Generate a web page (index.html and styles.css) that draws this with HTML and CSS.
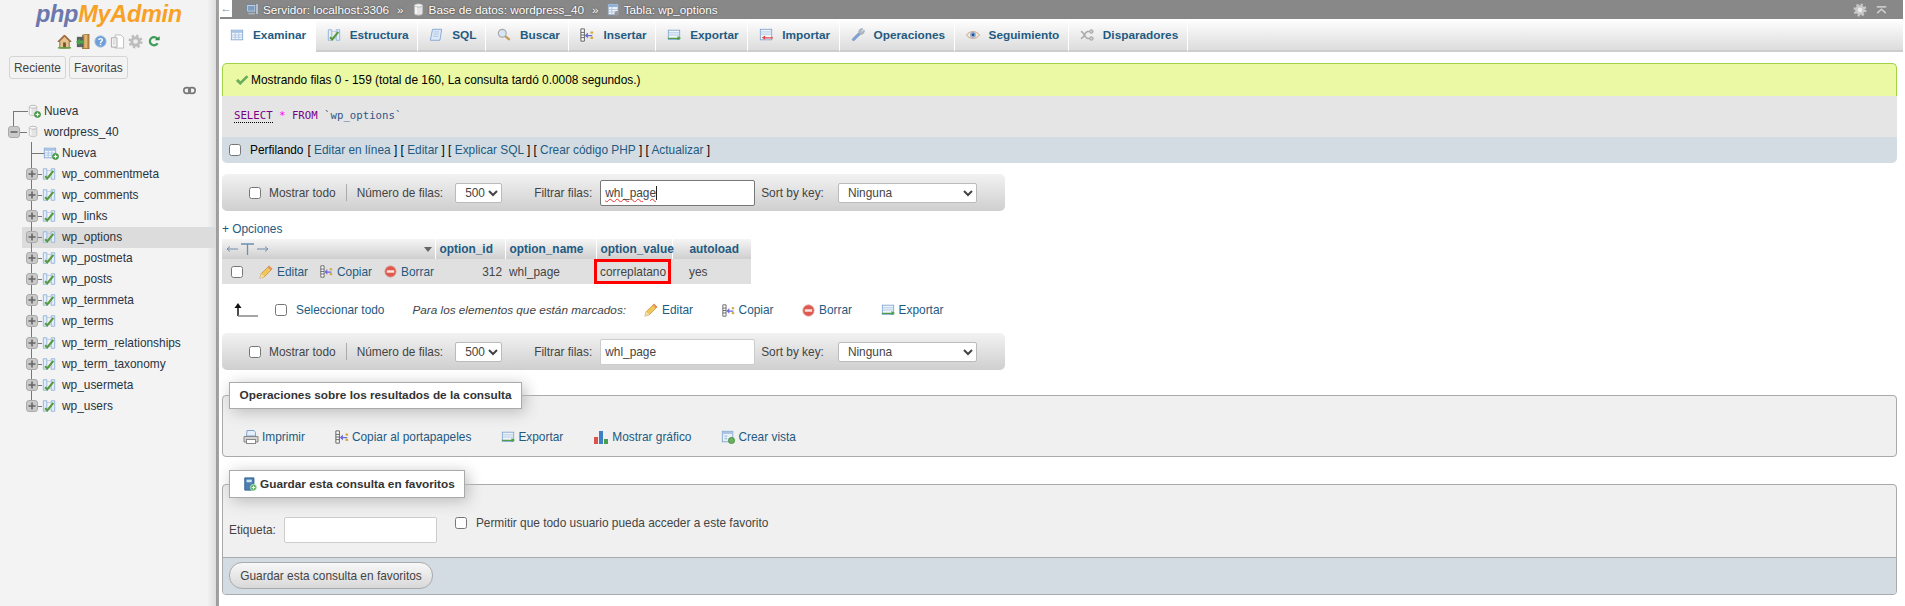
FILE: index.html
```html
<!DOCTYPE html>
<html lang="es">
<head>
<meta charset="utf-8">
<title>phpMyAdmin</title>
<link rel="stylesheet" href="styles.css">
</head>
<body>
<svg class="defs" width="0" height="0" aria-hidden="true">
  <defs>
    <symbol id="i-home" viewBox="0 0 16 16"><path d="M8 1 1 8h2v7h10V8h2z" fill="#e3c48f" stroke="#8a6a3c"/><path d="M8 1 1 8h2l5-5 5 5h2z" fill="#a5623a"/><rect x="6.5" y="9" width="3" height="6" fill="#7a5230"/><rect x="1" y="14" width="14" height="1.5" fill="#5ea34a"/></symbol>
    <symbol id="i-exit" viewBox="0 0 16 16"><path d="M8 1l7-1v16H8z" fill="#c08b45" stroke="#7a5523" stroke-width=".6"/><rect x="10" y="1" width="3" height="14" fill="#e2b673"/><rect x="2" y="3" width="7" height="11" fill="#59635c"/><path d="M1 8.500 5 5v2h4v3H5v2z" fill="#49a84f"/></symbol>
    <symbol id="i-help" viewBox="0 0 16 16"><circle cx="8" cy="8" r="7" fill="#6f9fd8" stroke="#a9c4e4"/><path d="M5.800 6.200C6 3.800 10.300 3.800 10.300 6.200 10.300 8 8 7.800 8 9.700" fill="none" stroke="#fff" stroke-width="1.700"/><rect x="7.100" y="10.700" width="1.800" height="1.800" fill="#fff"/></symbol>
    <symbol id="i-docs" viewBox="0 0 16 16"><path d="M5.500 1h6l3 3v11h-9z" fill="#fff" stroke="#bbb"/><path d="M1.500 4h6v10h-6z" fill="#f5f5f5" stroke="#aaa"/><path d="M3 6.500h3M3 8.500h3M3 10.500h3" stroke="#ccc"/></symbol>
    <symbol id="i-gear" viewBox="0 0 16 16"><circle cx="8" cy="8" r="5.500" fill="currentColor"/><circle cx="8" cy="8" r="6" fill="none" stroke="currentColor" stroke-width="3" stroke-dasharray="2.400 2.310"/><circle cx="8" cy="8" r="2.500" fill="#eee"/></symbol>
    <symbol id="i-reload" viewBox="0 0 16 16"><path d="M12.500 5A5.500 5.500 0 1 0 12.800 11" fill="none" stroke="#3f9d56" stroke-width="3"/><path d="M9 7h6.500V1.500z" fill="#2e8a47"/></symbol>
    <symbol id="i-link" viewBox="0 0 16 10"><rect x="1" y="1.500" width="8" height="7" rx="3.500" fill="none" stroke="#777" stroke-width="2"/><rect x="7" y="1.500" width="8" height="7" rx="3.500" fill="none" stroke="#777" stroke-width="2"/></symbol>
    <symbol id="i-db" viewBox="0 0 16 16"><path d="M3 3v10c0 2.600 10 2.600 10 0V3z" fill="#e4e4e4" stroke="#bbb"/><ellipse cx="8" cy="3" rx="5" ry="2" fill="#f7f7f7" stroke="#aaa"/><path d="M5 5v8" stroke="#fff" stroke-width="1.500"/></symbol>
    <symbol id="i-plusdot" viewBox="0 0 8 8"><circle cx="4" cy="4" r="3.500" fill="#4fa84f" stroke="#2f7d32" stroke-width=".7"/><path d="M2 4h4M4 2v4" stroke="#fff" stroke-width="1.200"/></symbol>
    <symbol id="i-plusbox" viewBox="0 0 12 12"><rect x=".5" y=".5" width="11" height="11" rx="2.500" fill="#c9c9c9" stroke="#aaa"/><path d="M2.500 6h7M6 2.500v7" stroke="#666" stroke-width="1.600"/></symbol>
    <symbol id="i-minusbox" viewBox="0 0 12 12"><rect x=".5" y=".5" width="11" height="11" rx="2.500" fill="#c9c9c9" stroke="#aaa"/><path d="M2.500 6h7" stroke="#666" stroke-width="1.600"/></symbol>
    <symbol id="i-table" viewBox="0 0 16 16"><rect x="1.500" y="2.500" width="13" height="11" fill="#f4f8fd" stroke="#7fa3cf"/><rect x="2" y="3" width="12" height="2.500" fill="#a9c3e4"/><path d="M2 8h12M2 10.500h12M6 5.500v8M10 5.500v8" stroke="#a9c3e4"/></symbol>
    <symbol id="i-props" viewBox="0 0 16 16"><path d="M1.500 2h4v12h-4zM10.500 2h4v12h-4z" fill="#e4eef9" stroke="#8fb0d8"/><path d="M5.500 4h5M5.500 12h5" stroke="#b8cce6"/><path d="M3.500 10.500 6 13l7-8.500" fill="none" stroke="#569a3f" stroke-width="2.400"/></symbol>
    <symbol id="i-sql" viewBox="0 0 16 16"><path d="M4 1.500h10.500L12.500 14H1.500z" fill="#dbe8f7" stroke="#7fa3cf"/><path d="M5.500 4.500h6M5 7h6M4.500 9.500h6" stroke="#a9c3e4"/></symbol>
    <symbol id="i-search" viewBox="0 0 16 16"><path d="M9 9l5.500 4.500" stroke="#c79a54" stroke-width="2.400"/><circle cx="6" cy="6" r="4.500" fill="#d7e6f7" stroke="#a7a7a7" stroke-width="1.300"/></symbol>
    <symbol id="i-insert" viewBox="0 0 16 16"><path d="M1 1h4v14H1z" fill="#fff" stroke="#555"/><path d="M1 5h4M1 8h4M1 11h4" stroke="#555"/><path d="M14 8H9V5L5.500 8.500 9 12V9.500h5z" fill="#6c6ad6"/><rect x="12" y="4" width="3" height="2.500" fill="#d6a83c"/><rect x="12" y="10" width="3" height="2.500" fill="#d6a83c"/></symbol>
    <symbol id="i-export" viewBox="0 0 16 16"><rect x="1.500" y="2.500" width="13" height="10.500" fill="#f0f5fb" stroke="#7fa3cf"/><path d="M2 5.500h12M2 8h12" stroke="#a9c3e4"/><path d="M1 11h11V9l4 2.500L12 14v-1.500H1z" fill="#4f9f4a"/></symbol>
    <symbol id="i-import" viewBox="0 0 16 16"><rect x="1.500" y="1.500" width="13" height="12" fill="#f0f5fb" stroke="#7fa3cf"/><path d="M2 4.500h12M2 7h12" stroke="#a9c3e4"/><path d="M16 10.500H7V8.500L3 11l4 2.500V12h9z" fill="#e0494a"/></symbol>
    <symbol id="i-wrench" viewBox="0 0 16 16"><path d="M2 12 9 5c-.5-2.500 1.500-4.500 4.500-4L11 3.500l1.500 1.500L15 2.500c.5 3-1.500 5-4 4.500l-7 7c-1.500 1.500-3.500-.5-2-2z" fill="#7fa3d3" stroke="#5f86b8" stroke-width=".6"/><path d="M9 5c-.5-2.500 1.500-4.500 4.500-4L11 3.500l1.500 1.500L15 2.500c.5 3-1.500 5-4 4.500z" fill="#b7b7b7"/></symbol>
    <symbol id="i-eye" viewBox="0 0 16 16"><path d="M.5 8C4 2.800 12 2.800 15.500 8 12 13.200 4 13.200.5 8z" fill="#f3e6da" stroke="#c99a77"/><circle cx="8" cy="7.800" r="3.300" fill="#86a9d8"/><circle cx="8" cy="7.800" r="1.400" fill="#234a80"/></symbol>
    <symbol id="i-trigger" viewBox="0 0 16 16"><path d="M1 4c4 0 4 8 8 8h2M1 12c4 0 4-8 8-8h2" fill="none" stroke="#aaa" stroke-width="1.800"/><circle cx="13" cy="4" r="2" fill="#ccc" stroke="#999"/><circle cx="13" cy="12" r="2" fill="#ccc" stroke="#999"/></symbol>
    <symbol id="i-check" viewBox="0 0 16 16"><path d="M1.500 9 6 13.500 15 4.500 13 3 6.300 9.800 3.300 7z" fill="#69b15e" stroke="#4a9144" stroke-width=".5"/></symbol>
    <symbol id="i-pencil" viewBox="0 0 16 16"><path d="M1 15l1.500-5L11.500 1l3.500 3.500-9 9z" fill="#f1c75b" stroke="#c08a2a" stroke-width=".8"/><path d="M1 15l1.500-5 3.500 3.500z" fill="#f3dfb4"/><path d="M11.500 1 15 4.500l-1.500 1.500L10 2.500z" fill="#e58c6a"/></symbol>
    <symbol id="i-del" viewBox="0 0 16 16"><circle cx="8" cy="8" r="7" fill="#e0594e" stroke="#d7b0aa"/><rect x="3.500" y="6.500" width="9" height="3" fill="#f7e6e3"/></symbol>
    <symbol id="i-print" viewBox="0 0 16 16"><path d="M4 1.500h7l1.500 2V7h-9z" fill="#e5eefa" stroke="#7fa3cf"/><path d="M1 7.500h14V13H1z" fill="#d3d3d3" stroke="#888"/><rect x="3.500" y="10.500" width="9" height="4" fill="#fff" stroke="#888"/></symbol>
    <symbol id="i-chart" viewBox="0 0 16 16"><rect x="1" y="8" width="4" height="7" fill="#d9534f"/><rect x="6" y="2" width="4" height="13" fill="#3f7fc4"/><rect x="11" y="10" width="4" height="5" fill="#4b9f4b"/></symbol>
    <symbol id="i-view" viewBox="0 0 16 16"><rect x="1.500" y="1.500" width="12" height="12" fill="#e8f0f9" stroke="#7fa3cf"/><rect x="2" y="2" width="11" height="2.500" fill="#a9c3e4"/><path d="M4 7h3M4 10h3" stroke="#7fa3cf"/><circle cx="12" cy="12" r="3.500" fill="#69b15e" stroke="#3f8a3c"/></symbol>
    <symbol id="i-book" viewBox="0 0 16 16"><path d="M2 1h10.500v14H2z" fill="#4a7fb0" stroke="#2f5f8f"/><rect x="4" y="3" width="6" height="3" fill="#cfe0f2"/><circle cx="12" cy="12" r="3.600" fill="#5db45c" stroke="#e8f5e8" stroke-width=".7"/><path d="M10 12h4M12 10v4" stroke="#fff"/></symbol>
    <symbol id="i-server" viewBox="0 0 16 16"><rect x="1" y="2" width="11" height="9" fill="#cfdcea" stroke="#6a7f96"/><rect x="2.500" y="3.500" width="8" height="6" fill="#7d9cc0"/><rect x="12" y="1" width="3" height="13" fill="#b9c2cc" stroke="#6f7a86" stroke-width=".6"/><rect x="3" y="12" width="8" height="2" fill="#aab4bf"/></symbol>
    <symbol id="i-tbl-bar" viewBox="0 0 16 16"><rect x="1.500" y="1.500" width="12" height="13" fill="#eef3f9" stroke="#8ca6c4"/><rect x="2" y="2" width="11" height="3" fill="#8fb0d8"/><path d="M2 8h11M2 11h11M6 5v9" stroke="#aebfd4"/><circle cx="12" cy="12.500" r="2.800" fill="#999"/></symbol>
    <symbol id="i-gear-top" viewBox="0 0 14 10"><path d="M1 1h12" stroke="#cfcfcf" stroke-width="2"/><path d="M1.500 9 7 4l5.500 5" fill="none" stroke="#cfcfcf" stroke-width="2"/></symbol>
    <symbol id="i-back" viewBox="0 0 25 14"><path d="M5 13V3" stroke="#111" stroke-width="1.500"/><path d="M1.500 5 5 0l3.500 5z" fill="#111"/><path d="M5 13h20" stroke="#888" stroke-width="1.500"/></symbol>
    <symbol id="i-cols" viewBox="0 0 41 12"><path d="M0 6h11M0 6l3-2.500M0 6l3 2.500M30 6h11M41 6l-3-2.500M41 6l-3 2.500" fill="none" stroke="#6d8fb0"/><path d="M14 1h13M20.500 1v11" stroke="#6d8fb0" stroke-width="1.300"/></symbol>
  </defs>
</svg>

<aside class="sidebar">
  <div class="logo"><span class="logo-php">php</span><span class="logo-my">MyAdmin</span></div>
  <div class="side-icons">
    <svg class="si"><use href="#i-home"/></svg>
    <svg class="si"><use href="#i-exit"/></svg>
    <svg class="si si-help"><use href="#i-help"/></svg>
    <svg class="si"><use href="#i-docs"/></svg>
    <svg class="si si-gear"><use href="#i-gear"/></svg>
    <svg class="si si-small"><use href="#i-reload"/></svg>
  </div>
  <div class="side-tabs">
    <button class="side-tab">Reciente</button>
    <button class="side-tab">Favoritas</button>
  </div>
  <div class="side-link"><svg class="link-ic"><use href="#i-link"/></svg></div>
  <ul class="tree">
    <li class="node node-top"><svg class="ic12 db"><use href="#i-db"/></svg><svg class="dot"><use href="#i-plusdot"/></svg><span>Nueva</span></li>
    <li class="node node-db"><svg class="box"><use href="#i-minusbox"/></svg><svg class="ic12 db"><use href="#i-db"/></svg><span>wordpress_40</span></li>
    <li class="node node-new"><svg class="ic14"><use href="#i-table"/></svg><svg class="dot dot-new"><use href="#i-plusdot"/></svg><span>Nueva</span></li>
    <li class="node node-t"><svg class="box box-t"><use href="#i-plusbox"/></svg><svg class="ic14"><use href="#i-props"/></svg><span>wp_commentmeta</span></li>
    <li class="node node-t"><svg class="box box-t"><use href="#i-plusbox"/></svg><svg class="ic14"><use href="#i-props"/></svg><span>wp_comments</span></li>
    <li class="node node-t"><svg class="box box-t"><use href="#i-plusbox"/></svg><svg class="ic14"><use href="#i-props"/></svg><span>wp_links</span></li>
    <li class="node node-t node-active"><svg class="box box-t"><use href="#i-plusbox"/></svg><svg class="ic14"><use href="#i-props"/></svg><span>wp_options</span></li>
    <li class="node node-t"><svg class="box box-t"><use href="#i-plusbox"/></svg><svg class="ic14"><use href="#i-props"/></svg><span>wp_postmeta</span></li>
    <li class="node node-t"><svg class="box box-t"><use href="#i-plusbox"/></svg><svg class="ic14"><use href="#i-props"/></svg><span>wp_posts</span></li>
    <li class="node node-t"><svg class="box box-t"><use href="#i-plusbox"/></svg><svg class="ic14"><use href="#i-props"/></svg><span>wp_termmeta</span></li>
    <li class="node node-t"><svg class="box box-t"><use href="#i-plusbox"/></svg><svg class="ic14"><use href="#i-props"/></svg><span>wp_terms</span></li>
    <li class="node node-t"><svg class="box box-t"><use href="#i-plusbox"/></svg><svg class="ic14"><use href="#i-props"/></svg><span>wp_term_relationships</span></li>
    <li class="node node-t"><svg class="box box-t"><use href="#i-plusbox"/></svg><svg class="ic14"><use href="#i-props"/></svg><span>wp_term_taxonomy</span></li>
    <li class="node node-t"><svg class="box box-t"><use href="#i-plusbox"/></svg><svg class="ic14"><use href="#i-props"/></svg><span>wp_usermeta</span></li>
    <li class="node node-t node-last"><svg class="box box-t"><use href="#i-plusbox"/></svg><svg class="ic14"><use href="#i-props"/></svg><span>wp_users</span></li>
  </ul>
</aside>

<main class="main">
  <div class="topwrap">
    <div class="toggle">←</div>
    <nav class="crumbs">
      <svg class="ic13"><use href="#i-server"/></svg><span class="crumb">Servidor: localhost:3306</span><span class="sep">»</span>
      <svg class="ic13"><use href="#i-db"/></svg><span class="crumb">Base de datos: wordpress_40</span><span class="sep">»</span>
      <svg class="ic13"><use href="#i-tbl-bar"/></svg><span class="crumb">Tabla: wp_options</span>
      <span class="crumbs-right"><svg class="ic14 gear-top"><use href="#i-gear"/></svg><svg class="up-ic"><use href="#i-gear-top"/></svg></span>
    </nav>
  </div>

  <nav class="tabs">
    <a class="tab tab-active"><svg class="ic14"><use href="#i-table"/></svg>Examinar</a>
    <a class="tab"><svg class="ic14"><use href="#i-props"/></svg>Estructura</a>
    <a class="tab"><svg class="ic14"><use href="#i-sql"/></svg>SQL</a>
    <a class="tab"><svg class="ic14"><use href="#i-search"/></svg>Buscar</a>
    <a class="tab"><svg class="ic14"><use href="#i-insert"/></svg>Insertar</a>
    <a class="tab"><svg class="ic14"><use href="#i-export"/></svg>Exportar</a>
    <a class="tab"><svg class="ic14"><use href="#i-import"/></svg>Importar</a>
    <a class="tab"><svg class="ic14"><use href="#i-wrench"/></svg>Operaciones</a>
    <a class="tab"><svg class="ic14"><use href="#i-eye"/></svg>Seguimiento</a>
    <a class="tab"><svg class="ic14"><use href="#i-trigger"/></svg>Disparadores</a>
    <div class="tab-rest"></div>
  </nav>

  <div class="content">
    <div class="success"><svg class="ic14"><use href="#i-check"/></svg>Mostrando filas 0 - 159 (total de 160, La consulta tardó 0.0008 segundos.)</div>
    <div class="sql"><span class="kw">SELECT</span> <span class="star">*</span> <span class="from">FROM</span> <span class="name">`wp_options`</span></div>
    <div class="profile">
      <input type="checkbox" class="cb">
      <span class="profile-label">Perfilando</span>
      <span class="profile-links">[ <a>Editar en línea</a> ] [ <a>Editar</a> ] [ <a>Explicar SQL</a> ] [ <a>Crear código PHP</a> ] [ <a>Actualizar</a> ]</span>
    </div>

    <div class="navbar">
      <input type="checkbox" class="cb">
      <span class="lb-all">Mostrar todo</span>
      <span class="vsep"></span>
      <span class="lb-rows">Número de filas:</span>
      <select class="sel sel-rows"><option>500</option></select>
      <span class="lb-filter">Filtrar filas:</span>
      <div class="filter filter-focus"><span class="typed">whl_page</span></div>
      <span class="lb-sort">Sort by key:</span>
      <select class="sel sel-key"><option>Ninguna</option></select>
    </div>

    <div class="options"><a>+ Opciones</a></div>

    <table class="results">
      <thead>
        <tr>
          <th class="c-actions"><div class="th-tools"><svg class="cols-ic"><use href="#i-cols"/></svg><span class="tri"></span></div></th>
          <th class="c-id">option_id</th>
          <th class="c-name">option_name</th>
          <th class="c-value">option_value</th>
          <th class="c-auto">autoload</th>
        </tr>
      </thead>
      <tbody>
        <tr>
          <td class="c-actions">
            <div class="row-actions">
              <input type="checkbox" class="cb">
              <a class="act"><svg class="ic14"><use href="#i-pencil"/></svg>Editar</a>
              <a class="act"><svg class="ic13"><use href="#i-insert"/></svg>Copiar</a>
              <a class="act"><svg class="ic13"><use href="#i-del"/></svg>Borrar</a>
            </div>
          </td>
          <td class="num">312</td>
          <td class="c-name">whl_page</td>
          <td class="c-value marked">correplatano</td>
          <td class="c-auto">yes</td>
        </tr>
      </tbody>
    </table>

    <div class="bulk">
      <svg class="back-ic"><use href="#i-back"/></svg>
      <input type="checkbox" class="cb">
      <a class="bulk-all">Seleccionar todo</a>
      <em class="bulk-text">Para los elementos que están marcados:</em>
      <a class="act bulk-act"><svg class="ic14"><use href="#i-pencil"/></svg>Editar</a>
      <a class="act bulk-act"><svg class="ic13"><use href="#i-insert"/></svg>Copiar</a>
      <a class="act bulk-act"><svg class="ic13"><use href="#i-del"/></svg>Borrar</a>
      <a class="act bulk-act"><svg class="ic14"><use href="#i-export"/></svg>Exportar</a>
    </div>

    <div class="navbar navbar-2">
      <input type="checkbox" class="cb">
      <span class="lb-all">Mostrar todo</span>
      <span class="vsep"></span>
      <span class="lb-rows">Número de filas:</span>
      <select class="sel sel-rows"><option>500</option></select>
      <span class="lb-filter">Filtrar filas:</span>
      <input class="filter" type="text" value="whl_page">
      <span class="lb-sort">Sort by key:</span>
      <select class="sel sel-key"><option>Ninguna</option></select>
    </div>

    <fieldset class="group group-ops">
      <legend class="legend">Operaciones sobre los resultados de la consulta</legend>
      <div class="ops">
        <a class="act"><svg class="ic16"><use href="#i-print"/></svg>Imprimir</a>
        <a class="act"><svg class="ic14"><use href="#i-insert"/></svg>Copiar al portapapeles</a>
        <a class="act"><svg class="ic14"><use href="#i-export"/></svg>Exportar</a>
        <a class="act"><svg class="ic16"><use href="#i-chart"/></svg>Mostrar gráfico</a>
        <a class="act"><svg class="ic14"><use href="#i-view"/></svg>Crear vista</a>
      </div>
    </fieldset>

    <fieldset class="group group-fav">
      <legend class="legend legend-fav"><svg class="ic14"><use href="#i-book"/></svg>Guardar esta consulta en favoritos</legend>
      <div class="fav-form">
        <label class="fav-label">Etiqueta:</label>
        <input class="fav-input" type="text">
        <input type="checkbox" class="cb fav-cb">
        <span class="fav-text">Permitir que todo usuario pueda acceder a este favorito</span>
      </div>
      <div class="fav-foot"><button class="fav-btn">Guardar esta consulta en favoritos</button></div>
    </fieldset>
  </div>
</main>
</body>
</html>
```

FILE: styles.css
```css
* { box-sizing: border-box; }
html, body { height: 100%; overflow: hidden; }
body {
  margin: 0;
  display: flex;
  background: #fff;
  color: #444;
  font: 11.88px/16px "Liberation Sans", Arial, sans-serif;
}
a { color: #235a81; text-decoration: none; }
svg { display: block; flex: none; }
.defs { position: absolute; }
.ic12 { width: 12px; height: 12px; }
.ic13 { width: 13px; height: 13px; }
.ic14 { width: 14px; height: 14px; }
.ic16 { width: 16px; height: 16px; }
.cb { width: 12px; height: 12px; margin: 0; flex: none; }

/* Sidebar */
.sidebar {
  width: 219px;
  height: 606px;
  flex: none;
  background: linear-gradient(to right, #f3f3f3 207px, #dedede 216px, #9b9b9b 216px, #a5a5a5 219px);
}
.logo {
  margin: 2px 0 0 36px;
  height: 26px;
  font: italic bold 23.5px/24px "Liberation Sans", Arial, sans-serif;
  letter-spacing: -.3px;
}
.logo-php { color: #6b78ad; }
.logo-my { color: #f7a126; }
.side-icons {
  display: flex;
  align-items: center;
  gap: 3px;
  height: 16px;
  margin: 5px 0 0 57px;
}
.si { width: 15px; height: 15px; }
.si-help { width: 13px; height: 13px; margin-left: 1px; }
.si-gear { color: #bdbdbd; }
.si-small { width: 12px; height: 12px; margin-left: 2px; }
.side-tabs { display: flex; gap: 3px; margin: 7px 0 0 9px; }
.side-tab {
  height: 23px;
  padding: 0 4px;
  border: 1px solid #d5d5d5;
  border-radius: 3px;
  background: #f3f3f3;
  color: #444;
  font: 11.88px "Liberation Sans", Arial, sans-serif;
}
.side-link { display: flex; justify-content: flex-end; height: 12px; margin: 5px 23px 0 0; }
.link-ic { width: 13px; height: 9px; margin-top: 2px; }
.tree { list-style: none; margin: 4px 0 0; padding: 0; color: #2a3440; }
.node {
  position: relative;
  display: flex;
  align-items: center;
  height: 21.1px;
}
.node span { white-space: nowrap; }
.node-top { padding-left: 27px; }
.node-top span, .node-db span { margin-left: 5px; }
.node-top::before {
  content: "";
  position: absolute;
  left: 13px;
  top: 50%;
  width: 14px;
  height: 50%;
  border: solid #777;
  border-width: 1px 0 0 1px;
}
.db { width: 12px; height: 13px; }
.dot { width: 7px; height: 7px; margin: 7px 0 0 -4px; }
.dot + span { margin-left: 3px; }
.node-top .dot { margin-left: -5px; }
.node-top .dot + span { margin-left: 3px; }
.node-db { padding-left: 8px; }
.node-db::before {
  content: "";
  position: absolute;
  left: 13px;
  top: 0;
  height: 7px;
  border-left: 1px solid #777;
}
.node-db::after {
  content: "";
  position: absolute;
  left: 19px;
  top: 50%;
  width: 8px;
  border-top: 1px solid #777;
}
.box { width: 12px; height: 12px; position: relative; z-index: 1; }
.node-db .db { margin-left: 7px; }
.node-new { padding-left: 43px; }
.node-new::before {
  content: "";
  position: absolute;
  left: 31px;
  top: 0;
  width: 12px;
  height: 50%;
  border: solid #777;
  border-width: 0 0 1px 1px;
}
.node-new::after {
  content: "";
  position: absolute;
  left: 31px;
  top: 50%;
  height: 50%;
  border-left: 1px solid #777;
}
.dot-new { margin-left: -5px; }
.dot-new + span { margin-left: 3px; }
.node-t { padding-left: 26px; }
.node-t span { margin-left: 6px; position: relative; }
.node-t .ic14 { margin-left: 4px; position: relative; }
.node-t::before {
  content: "";
  position: absolute;
  left: 31px;
  top: 0;
  height: 100%;
  border-left: 1px solid #777;
}
.node-t::after {
  content: "";
  position: absolute;
  left: 37px;
  top: 50%;
  width: 5px;
  border-top: 1px solid #777;
}
.node-last::before { height: 50%; }
.node-active {
  margin-left: 22px;
  padding-left: 4px;
  background: #dcdcdc;
  width: 194px;
}
.node-active::before { left: 9px; }
.node-active::after { left: 15px; }

/* Main */
.main { flex: 1; min-width: 0; }
.topwrap { display: flex; height: 19px; margin: 0 2px 0 1px; background: #888; }
.toggle {
  width: 12px;
  height: 17px;
  background: #fff;
  color: #888;
  font-size: 11px;
  line-height: 16px;
  text-align: center;
}
.crumbs {
  flex: 1;
  display: flex;
  align-items: center;
  padding: 0 0 0 14px;
  color: #fff;
  font-size: 11.75px;
  text-shadow: 0 0 2px #333;
}
.crumbs .ic13 { margin-right: 4px; }
.sep { margin: 0 8px; }
.crumb { white-space: nowrap; }
.crumbs-right { display: flex; align-items: center; margin-left: auto; padding-right: 16px; gap: 9px; }
.gear-top { color: #c9c9c9; }
.up-ic { width: 11px; height: 8px; }
.tabs { display: flex; height: 33px; margin-right: 2px; }
.tab {
  display: flex;
  align-items: center;
  gap: 9px;
  padding: 0 8.500px 0 11px;
  border-right: 1px solid #fff;
  border-bottom: 2px solid #cdcdcd;
  background: linear-gradient(#fff, #dcdcdc);
  font-size: 11.8px;
  font-weight: bold;
  white-space: nowrap;
}
.tab-active { background: #fff; border-bottom-color: #fff; }
.tab-rest { flex: 1; border-bottom: 2px solid #cdcdcd; background: linear-gradient(#fff, #dcdcdc); }
.content { padding: 0 8px 0 3px; }

.success {
  display: flex;
  align-items: center;
  gap: 2px;
  height: 33px;
  margin-top: 11px;
  padding-left: 12px;
  background: #ebf8a4;
  border: 1px solid #a2d246;
  border-bottom: 0;
  border-radius: 5px 5px 0 0;
  color: #000;
}
.sql {
  height: 41px;
  padding: 12px 0 0 12px;
  background: #e5e5e5;
  font: 10.7px/16px "DejaVu Sans Mono", "Liberation Mono", monospace;
}
.kw { color: #708; border-bottom: 1px dotted #000; }
.star { color: #f0f; }
.from { color: #708; }
.name { color: #358; }
.profile {
  display: flex;
  align-items: center;
  height: 26px;
  padding-left: 7px;
  background: #d3dce3;
  border-radius: 0 0 5px 5px;
  color: #000;
}
.profile-label { margin: 0 4px 0 9px; }
.navbar {
  display: flex;
  align-items: center;
  width: 783px;
  height: 37px;
  margin-top: 11px;
  padding-left: 27px;
  background: linear-gradient(#f2f2f2, #cfcfcf);
  border-radius: 5px;
}
.navbar-2 { margin-top: 11px; }
.lb-all { margin-left: 8px; }
.vsep { width: 1px; height: 17px; margin: 0 10px; background: #aaa; }
.lb-filter { margin-left: 32px; }
.lb-sort { margin-left: 6px; }
.sel {
  height: 20px;
  padding: 0 0 0 5px;
  border: 1px solid #bbb;
  border-radius: 2px;
  background: #fff;
  color: #444;
  font: 11.88px "Liberation Sans", Arial, sans-serif;
}
.sel-rows { width: 47px; margin-left: 12px; }
.sel-key { width: 139px; margin-left: 14px; }
.filter {
  width: 155px;
  height: 26px;
  margin-left: 8px;
  padding: 0 4px;
  border: 1px solid #ccc;
  border-radius: 2px;
  background: #fff;
  color: #444;
  font: 11.88px/24px "Liberation Sans", Arial, sans-serif;
}
.filter-focus { border-color: #777; }
.typed {
  border-right: 1px solid #222;
  text-decoration: underline wavy #e33;
  text-decoration-thickness: 1px;
}
.options { height: 16px; margin-top: 10px; }

.results { width: 529px; table-layout: fixed; border-collapse: collapse; margin-top: 2px; }
.results th {
  height: 20px;
  padding: 0 0 0 4px;
  border-right: 1px solid #fff;
  background: linear-gradient(#f5f5f5, #cfcfcf);
  color: #235a81;
  font-weight: bold;
  text-align: left;
}
.results td { height: 25px; padding: 0 0 0 4px; background: #e0e0e0; white-space: nowrap; }
.results .c-actions { width: 213px; padding: 0; }
.c-id { width: 70px; }
.c-name { width: 91px; }
.results .c-value { width: 76px; }
.results .c-auto { width: 79px; padding-left: 17px; border-right: 0; }
.results .num { text-align: right; padding-right: 3px; }
.results .marked { position: relative; }
.marked::after {
  content: "";
  position: absolute;
  inset: 0 1px 0 -2px;
  border: 3px solid #f00;
}
.th-tools { display: flex; align-items: center; justify-content: space-between; padding: 0 3px 0 5px; }
.cols-ic { width: 41px; height: 12px; }
.tri { width: 0; height: 0; border: solid transparent; border-width: 5px 4.500px 0; border-top-color: #666; }
.row-actions { display: flex; align-items: center; gap: 12px; padding-left: 9px; }
.row-actions .cb { margin-right: 4px; }
.act { display: flex; align-items: center; gap: 4px; white-space: nowrap; }

.bulk { display: flex; align-items: center; height: 24px; margin-top: 14px; padding-left: 11px; }
.back-ic { width: 25px; height: 14px; margin-right: 17px; }
.bulk-all { margin-left: 9px; }
.bulk-text { margin: 0 18px 0 28px; font-size: 11.75px; }
.bulk-act { margin-right: 28.5px; }

.group {
  margin: 12px 0 0;
  padding: 0;
  min-width: 0;
  background: #f0f0f0;
  border: 1px solid #aaa;
  border-radius: 4px;
}
.legend {
  height: 27px;
  margin-left: 6px;
  padding: 0 9.500px;
  background: #fff;
  border: 1px solid #aaa;
  box-shadow: 3px 3px 15px #bbb;
  color: #333;
  font-size: 11.8px;
  font-weight: bold;
  line-height: 25px;
}
.legend-fav { display: flex; align-items: center; gap: 3px; height: 28px; padding: 0 9px 0 13px; }
.ops { display: flex; align-items: center; gap: 30px; height: 47px; padding: 9px 0 0 20px; }
.ops .act { gap: 3px; }
.group-fav { margin-top: 13px; }
.fav-form { display: flex; align-items: flex-start; height: 59px; padding-left: 6px; }
.fav-label { margin-top: 24px; }
.fav-input {
  width: 153px;
  height: 26px;
  margin: 19px 0 0 8px;
  border: 1px solid #ccc;
  border-radius: 2px;
  background: #fff;
}
.fav-cb { margin: 19px 0 0 18px; }
.fav-text { margin: 17px 0 0 9px; }
.fav-foot { height: 37px; padding: 4px 0 0 6px; background: #d3dce3; border-top: 1px solid #aaa; border-radius: 0 0 3px 3px; }
.fav-btn {
  width: 204px;
  height: 27px;
  padding: 0;
  border: 1px solid #aaa;
  border-radius: 13px;
  background: linear-gradient(#f8f8f8, #d8d8d8);
  color: #444;
  font: 11.88px "Liberation Sans", Arial, sans-serif;
}
```
